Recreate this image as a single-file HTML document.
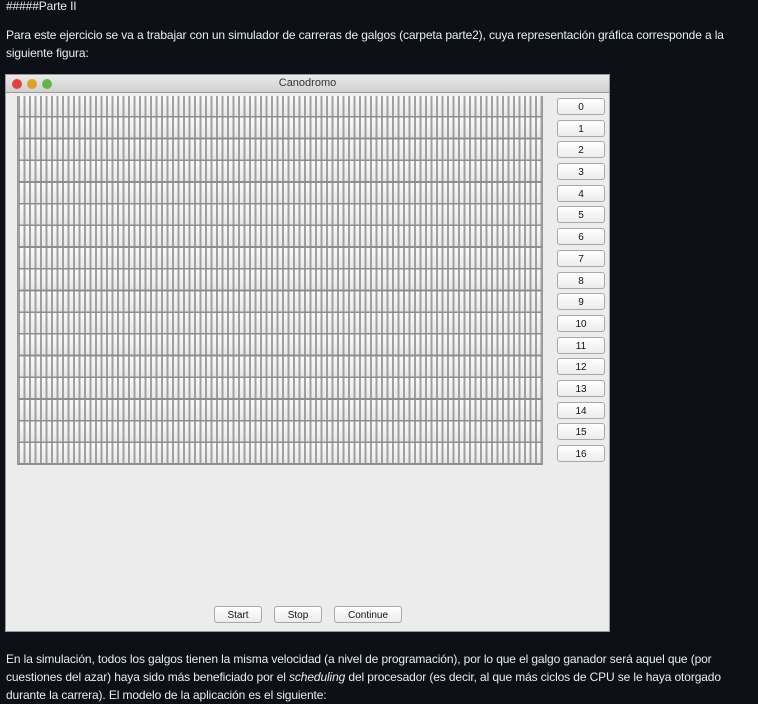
<!DOCTYPE html>
<html><head><meta charset="utf-8"><style>
body{margin:0;width:758px;height:699px;background:#0d1117;color:#e6edf3;font-family:"Liberation Sans",sans-serif;font-size:12px;letter-spacing:-0.12px;position:relative;overflow:hidden}
.t{position:absolute;left:6px;white-space:nowrap;line-height:18px}
.win{position:absolute;left:5px;top:74px;width:605px;height:558px;background:#ececec;border:1px solid #999;box-sizing:border-box;letter-spacing:0}
.title{height:17px;background:linear-gradient(#ebebeb,#cfcfcf);border-bottom:1px solid #999;text-align:center;font-size:11px;line-height:17px;color:#333}
.dot{position:absolute;top:4px;width:10px;height:10px;border-radius:50%}
.grid{position:absolute;left:11px;top:21px;width:526px;height:369px;border-left:1px solid #999;border-right:1px solid #999;box-sizing:border-box;
background:
repeating-linear-gradient(180deg,transparent 0 20px,#8e8e8e 20px 21.7px),
repeating-linear-gradient(90deg,#a0a0a0 0 2px,transparent 2px 5.5px),
repeating-linear-gradient(180deg,#fafafa 0,#e6e6e6 21.7px);}
.b{position:absolute;left:551px;width:46px;height:15px;border:1px solid #a8a8a8;border-radius:3px;background:linear-gradient(#fff,#ececec);font-size:10px;text-align:center;line-height:17px;color:#111}
.bb{position:absolute;top:531px;height:15px;border:1px solid #a8a8a8;border-radius:3px;background:linear-gradient(#fff,#ececec);font-size:10px;text-align:center;line-height:17px;color:#111}
</style></head><body>
<div class="t" style="top:-3px">#####Parte II</div>
<div class="t" style="top:26px">Para este ejercicio se va a trabajar con un simulador de carreras de galgos (carpeta parte2), cuya representación gráfica corresponde a la</div>
<div class="t" style="top:44px">siguiente figura:</div>
<div class="win">
<div class="title">Canodromo</div>
<div class="dot" style="left:6px;background:#e0443e"></div>
<div class="dot" style="left:21px;background:#dea123"></div>
<div class="dot" style="left:36px;background:#64b548"></div>
<div class="grid"></div>
<div class="b" style="top:23px">0</div><div class="b" style="top:45px">1</div><div class="b" style="top:66px">2</div><div class="b" style="top:88px">3</div><div class="b" style="top:110px">4</div><div class="b" style="top:131px">5</div><div class="b" style="top:153px">6</div><div class="b" style="top:175px">7</div><div class="b" style="top:197px">8</div><div class="b" style="top:218px">9</div><div class="b" style="top:240px">10</div><div class="b" style="top:262px">11</div><div class="b" style="top:283px">12</div><div class="b" style="top:305px">13</div><div class="b" style="top:327px">14</div><div class="b" style="top:348px">15</div><div class="b" style="top:370px">16</div>
<div class="bb" style="left:208px;width:46px">Start</div>
<div class="bb" style="left:268px;width:46px">Stop</div>
<div class="bb" style="left:328px;width:66px">Continue</div>
</div>
<div class="t" style="top:650px">En la simulación, todos los galgos tienen la misma velocidad (a nivel de programación), por lo que el galgo ganador será aquel que (por</div>
<div class="t" style="top:668px">cuestiones del azar) haya sido más beneficiado por el <i>scheduling</i> del procesador (es decir, al que más ciclos de CPU se le haya otorgado</div>
<div class="t" style="top:686px">durante la carrera). El modelo de la aplicación es el siguiente:</div>
</body></html>
